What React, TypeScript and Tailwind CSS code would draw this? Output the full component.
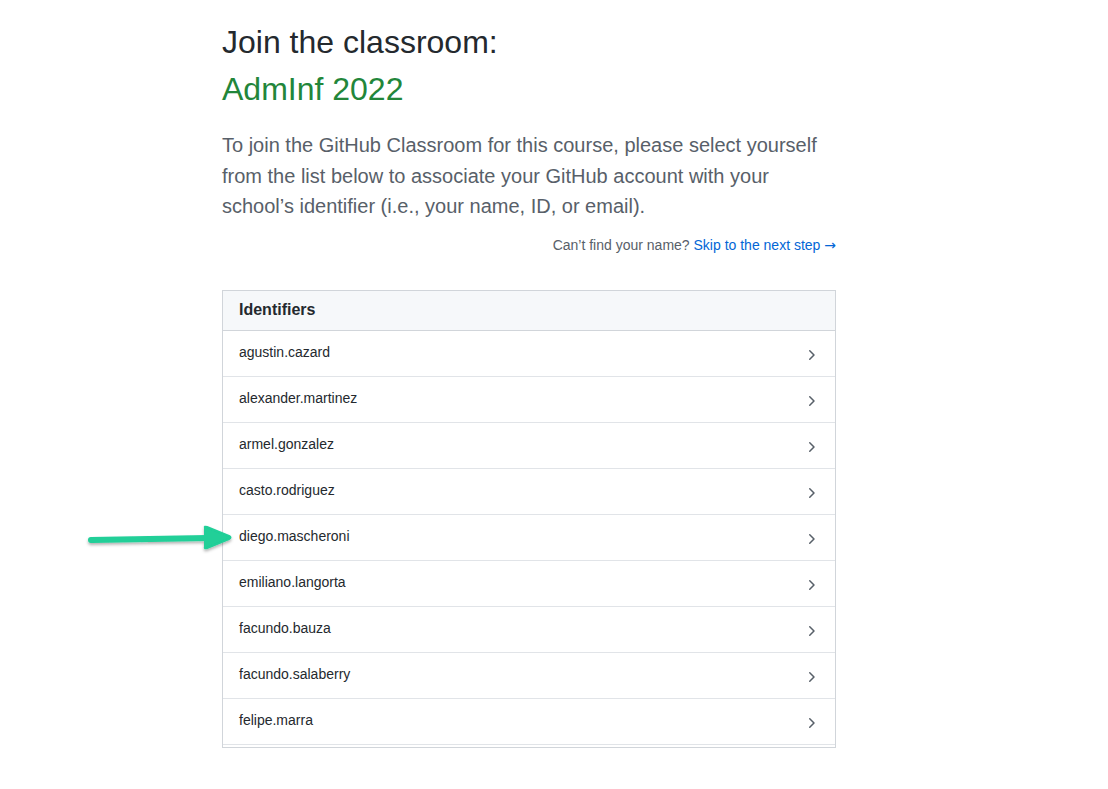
import React from "react";

const names = [
  "agustin.cazard",
  "alexander.martinez",
  "armel.gonzalez",
  "casto.rodriguez",
  "diego.mascheroni",
  "emiliano.langorta",
  "facundo.bauza",
  "facundo.salaberry",
  "felipe.marra",
];

function Chevron() {
  return (
    <svg width="16" height="16" viewBox="0 0 16 16" fill="#586069">
      <path d="M6.22 3.22a.75.75 0 0 1 1.06 0l4.25 4.25a.75.75 0 0 1 0 1.06l-4.25 4.25a.751.751 0 0 1-1.042-.018.751.751 0 0 1-.018-1.042L9.94 8 6.22 4.28a.75.75 0 0 1 0-1.06Z" />
    </svg>
  );
}

export default function App() {
  return (
    <div
      className="relative min-h-[789px] w-full bg-white"
      style={{ fontFamily: '"Liberation Sans", Arial, Helvetica, sans-serif' }}
    >
      <div className="ml-[222px] w-[614px] pt-[18px]">
        <h1 className="text-[32px] leading-[48px] font-normal text-[#24292e]">Join the classroom:</h1>
        <h2 className="text-[32px] leading-[48px] font-normal text-[#22863a] -mt-[1px]">AdmInf 2022</h2>
        <p className="mt-[17px] text-[20px] leading-[30.5px] text-[#586069] pr-2">
          To join the GitHub Classroom for this course, please select yourself from the list below to associate your GitHub account with your school’s identifier (i.e., your name, ID, or email).
        </p>
        <div className="mt-[13px] text-right text-[14px] leading-[21px] text-[#586069]">
          Can’t find your name?{" "}
          <span className="text-[#0366d6]">
            Skip to the next step <span className="font-['DejaVu_Sans']">→</span>
          </span>
        </div>
        <div className="mt-[34px] border border-[#d1d5da]">
          <div className="h-[40px] bg-[#f6f8fa] border-b border-[#d1d5da] px-4 flex items-center text-[16px] font-bold text-[#24292e]">
            Identifiers
          </div>
          <div className="h-[416px] overflow-hidden">
            {names.map((n) => (
              <div
                key={n}
                className="h-[46px] border-b border-[#e1e4e8] pl-4 pr-[16px] flex items-center justify-between text-[14px] text-[#24292e]"
              >
                <span className="-mt-[2px]">{n}</span>
                <span className="mt-[4px]">
                  <Chevron />
                </span>
              </div>
            ))}
            <div className="h-[46px] border-b border-[#e1e4e8]" />
          </div>
        </div>
      </div>
      <svg
        className="absolute left-[80px] top-[518px]"
        width="160"
        height="40"
        viewBox="0 0 160 40"
      >
        <defs>
          <filter id="sh" x="-10%" y="-50%" width="120%" height="200%">
            <feDropShadow dx="0" dy="2" stdDeviation="1.5" floodColor="#000" floodOpacity="0.3" />
          </filter>
        </defs>
        <g filter="url(#sh)">
          <line x1="11" y1="22" x2="128" y2="20" stroke="#20cf98" strokeWidth="6" strokeLinecap="round" />
          <path d="M125 10 Q124 8 127 9 L149 18 Q152 19.5 149 21 L127 30 Q124 31 125 29 Z" fill="#20cf98" stroke="#20cf98" strokeWidth="2" strokeLinejoin="round" />
        </g>
      </svg>
    </div>
  );
}
